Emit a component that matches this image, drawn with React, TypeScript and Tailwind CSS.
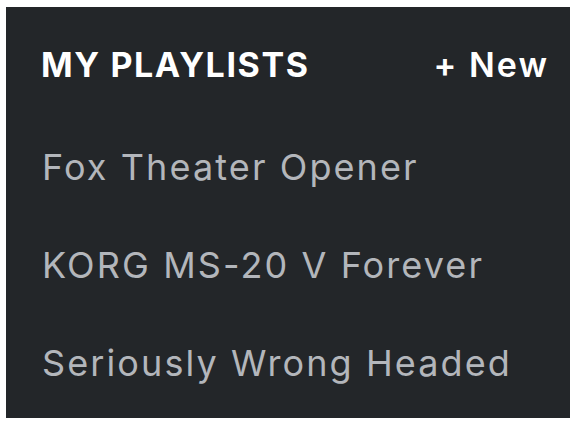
import React from 'react';

const playlists = [
  'Fox Theater Opener',
  'KORG MS-20 V Forever',
  'Seriously Wrong Headed',
];

export default function App() {
  return (
    <div className="w-[573px] h-[423px] bg-white pt-[7px] pl-[6px] font-['Inter','Liberation_Sans',sans-serif]">
      <div className="w-[564px] h-[411px] bg-[#232629] pl-[35px] pr-[21px] pt-[41px]">
        <div className="flex items-baseline justify-between">
          <h2 className="text-[34px] leading-none font-bold text-white tracking-[1.6px]">
            MY PLAYLISTS
          </h2>
          <button className="text-[34px] leading-none font-semibold text-white tracking-[2px]">
            + New
          </button>
        </div>
        <ul className="mt-[67px] flex flex-col gap-[62px]">
          {playlists.map(name => (
            <li
              key={name}
              className="text-[36px] leading-none text-[#b3b6bb] tracking-[2.1px] pl-[1px]"
            >
              {name}
            </li>
          ))}
        </ul>
      </div>
    </div>
  );
}
